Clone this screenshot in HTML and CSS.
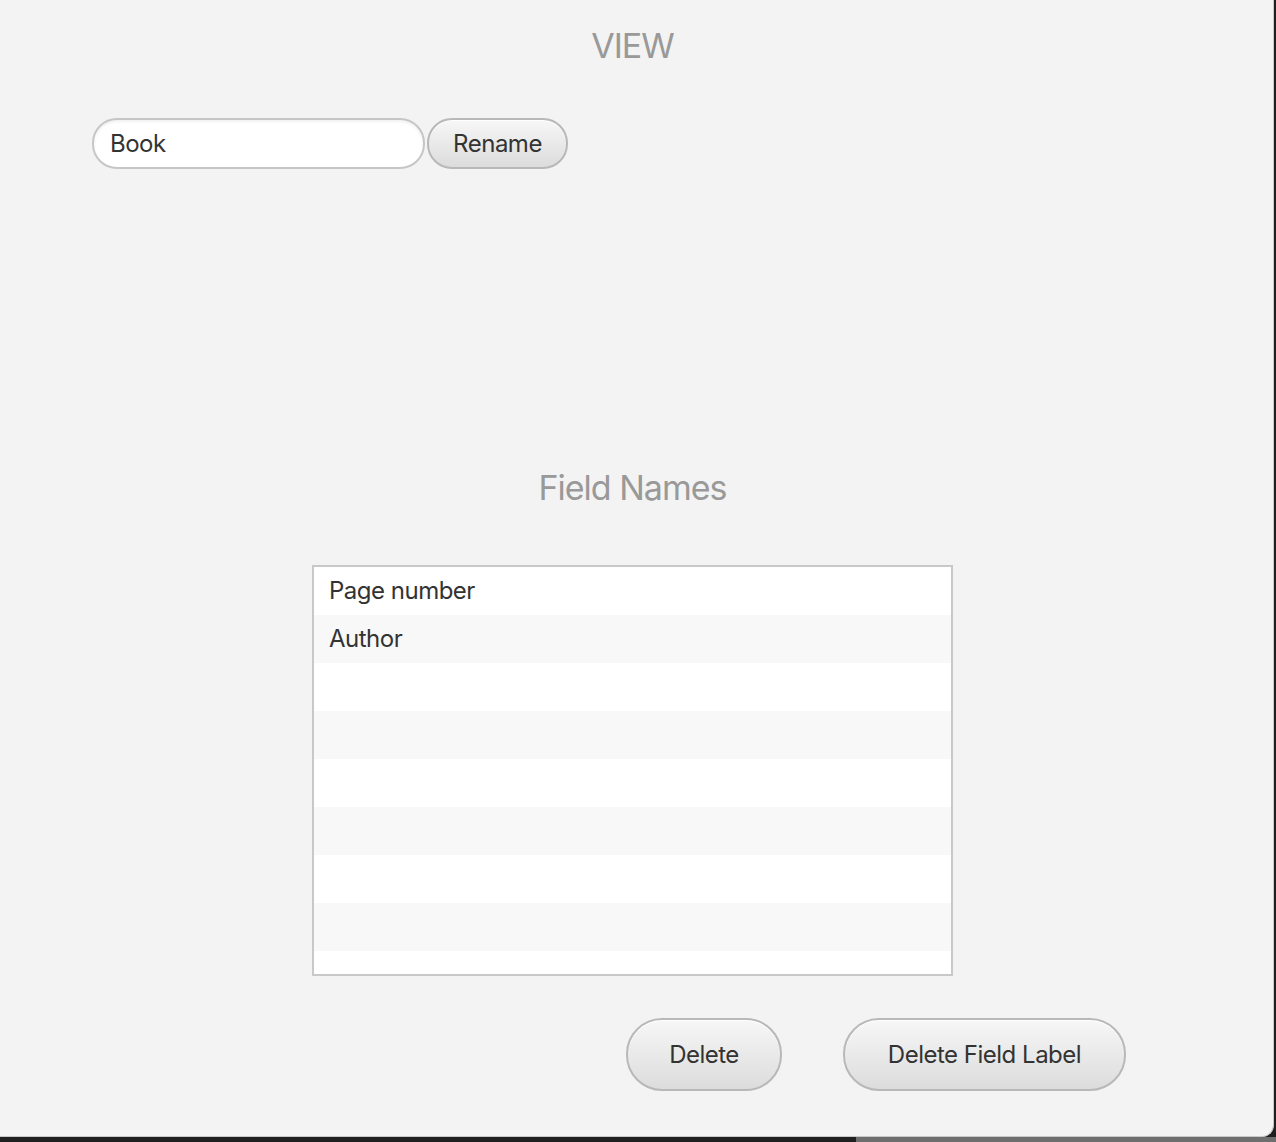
FILE: index.html
```html
<!DOCTYPE html>
<html>
<head>
<meta charset="utf-8">
<link rel="stylesheet" href="styles.css">
</head>
<body>
<div class="screen">
  <div class="window">
    <h1 class="title">VIEW</h1>
    <div class="rename-row">
      <div class="text-input">Book</div>
      <button class="btn btn-small">Rename</button>
    </div>
    <h2 class="subtitle">Field Names</h2>
    <div class="list">
      <div class="row">Page number</div>
      <div class="row alt">Author</div>
      <div class="row"></div>
      <div class="row alt"></div>
      <div class="row"></div>
      <div class="row alt"></div>
      <div class="row"></div>
      <div class="row alt"></div>
      <div class="row"></div>
    </div>
    <div class="actions">
      <button class="btn btn-big btn-delete">Delete</button>
      <button class="btn btn-big btn-label">Delete Field Label</button>
    </div>
  </div>
  <div class="taskbar">
    <div class="tb-left"></div>
    <div class="tb-right"></div>
  </div>
</div>
</body>
</html>
```

FILE: styles.css
```css
html, body {
  margin: 0;
  padding: 0;
  background: #1f1f1f;
}
body {
  font-family: Inter, "Noto Sans", "Liberation Sans", sans-serif;
  color: #333;
}
.screen {
  width: 1276px;
  height: 1142px;
  display: flex;
  flex-direction: column;
  overflow: hidden;
}
.window {
  width: 1274px;
  height: 1137px;
  box-sizing: border-box;
  padding-right: 8px;
  background: #f3f3f3;
  border-right: 1px solid #c8c8c8;
  border-bottom: 1px solid #c8c8c8;
  border-bottom-right-radius: 12px;
  display: flex;
  flex-direction: column;
  align-items: center;
  flex: none;
}
.title {
  margin: 24px 0 0;
  font-size: 34px;
  font-weight: 400;
  line-height: 44px;
  color: #999;
  letter-spacing: -1px;
}
.rename-row {
  align-self: flex-start;
  margin: 50px 0 0 92px;
  display: flex;
  gap: 2px;
}
.text-input {
  width: 333px;
  height: 51px;
  box-sizing: border-box;
  border: 2px solid #c6c6c6;
  border-radius: 25px;
  background: #fff;
  box-shadow: inset 0 2px 3px rgba(0,0,0,0.06);
  font-size: 24px;
  line-height: 47px;
  padding-left: 16px;
  letter-spacing: -0.5px;
}
.btn {
  font-family: inherit;
  color: #333;
  box-sizing: border-box;
  border: 2px solid #b8b8b8;
  background: linear-gradient(#f7f7f7, #dcdcdc);
  box-shadow: inset 0 1px 0 #fff;
  padding: 0;
  letter-spacing: -0.5px;
}
.btn-small {
  width: 141px;
  height: 51px;
  border-radius: 25px;
  font-size: 24px;
}
.subtitle {
  margin: 297px 0 0;
  font-size: 34px;
  font-weight: 400;
  line-height: 44px;
  color: #999;
  letter-spacing: -1px;
}
.list {
  margin-top: 55px;
  width: 641px;
  height: 411px;
  box-sizing: border-box;
  border: 2px solid #c8c8c8;
  background: #fff;
  overflow: hidden;
}
.row {
  height: 48px;
  line-height: 48px;
  font-size: 24px;
  padding-left: 15px;
  letter-spacing: -0.5px;
  background: #fff;
}
.row.alt {
  background: #f8f8f8;
}
.actions {
  align-self: flex-start;
  margin: 42px 0 0 626px;
  display: flex;
  gap: 61px;
}
.btn-big {
  height: 73px;
  border-radius: 36px;
  font-size: 24px;
}
.btn-delete {
  width: 156px;
}
.btn-label {
  width: 283px;
}
.taskbar {
  flex: 1;
  display: flex;
}
.tb-left {
  width: 856px;
  background: #1f1f1f;
}
.tb-right {
  flex: 1;
  background: #6e6e6e;
}
```
